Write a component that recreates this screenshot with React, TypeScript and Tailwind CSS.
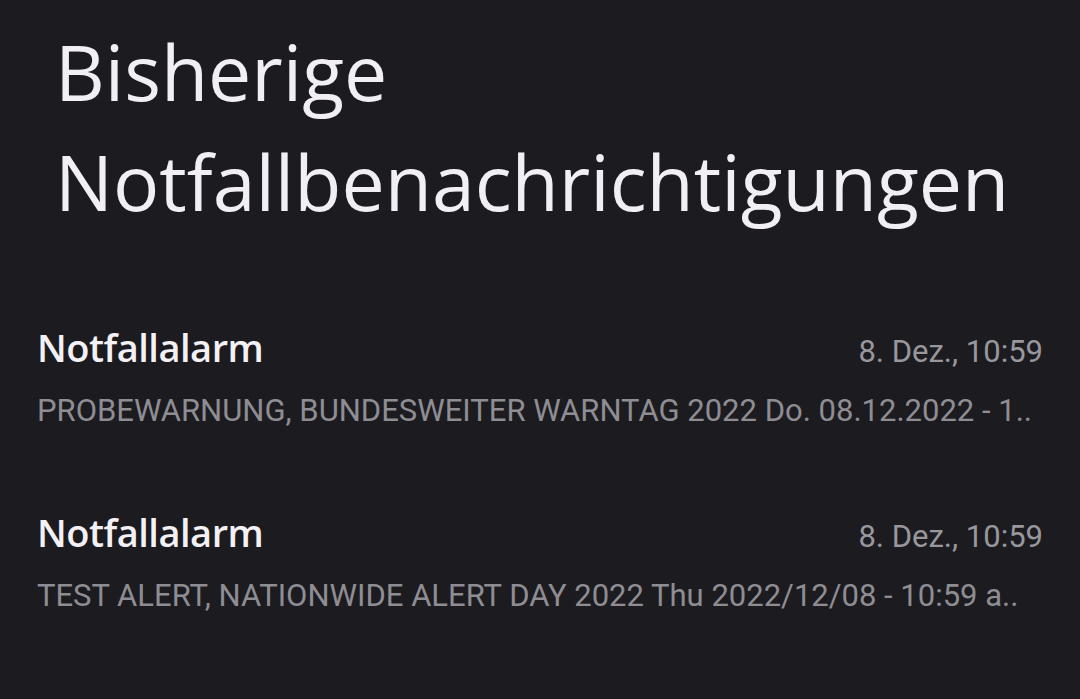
const alerts = [
  {
    id: 1,
    title: "Notfallalarm",
    time: "8. Dez., 10:59",
    body: "PROBEWARNUNG, BUNDESWEITER WARNTAG 2022 Do. 08.12.2022 - 1..",
  },
  {
    id: 2,
    title: "Notfallalarm",
    time: "8. Dez., 10:59",
    body: "TEST ALERT, NATIONWIDE ALERT DAY 2022 Thu 2022/12/08 - 10:59 a..",
  },
];

export default function App() {
  return (
    <div className="w-[1080px] h-[699px] overflow-hidden bg-[#1c1b20] font-['Roboto',sans-serif]">
      <h1 className="pl-[55px] pt-[17px] text-[77px] leading-[110px] text-[#f2eff4] font-['Open_Sans',sans-serif]">
        Bisherige
        <br />
        Notfallbenachrichtigungen
      </h1>

      <div className="mt-[82px]">
        {alerts.map((a) => (
          <div key={a.id} className="px-[37px] h-[185px]">
            <div className="flex items-baseline justify-between">
              <span className="text-[38px] leading-[56px] font-semibold text-[#f4f1f6] font-['Open_Sans',sans-serif] tracking-[-0.5px]">
                {a.title}
              </span>
              <span className="text-[31px] leading-[56px] text-[#98979d]">
                {a.time}
              </span>
            </div>
            <p className="mt-[2px] text-[31px] leading-[58px] text-[#8e8d93] whitespace-nowrap">
              {a.body}
            </p>
          </div>
        ))}
      </div>
    </div>
  );
}
